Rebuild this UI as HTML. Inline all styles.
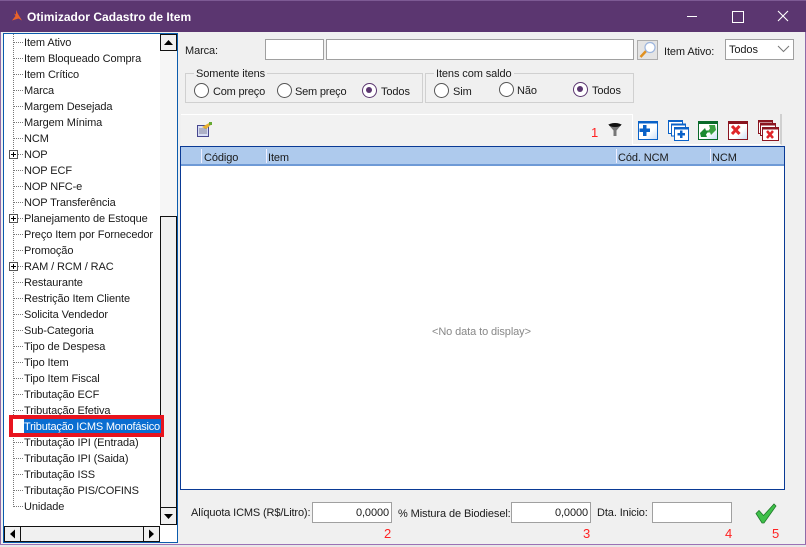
<!DOCTYPE html>
<html><head><meta charset="utf-8">
<style>
html,body{margin:0;padding:0}
body{width:806px;height:547px;position:relative;overflow:hidden;background:#f0f0f0;font:10.5px "DejaVu Sans",sans-serif;color:#1a1a1a}
.a{position:absolute}
.t{position:absolute;white-space:nowrap;line-height:14px;font-family:"Liberation Sans",sans-serif;font-size:11px;letter-spacing:-.1px;margin-top:1px}
.i{position:absolute;background:#fff;border:1px solid #a0a0a0;box-sizing:border-box;border-width:1px}
.g{position:absolute;border:1px solid #d0d0d0;box-sizing:border-box}
.r{position:absolute;width:15px;height:15px;border:1.3px solid #555;border-radius:50%;box-sizing:border-box;background:#fff}
.r.on{border-color:#5b3670}
.r.on:after{content:"";position:absolute;left:3px;top:3px;width:6.4px;height:6.4px;background:#5b3670;border-radius:50%}
.n{position:absolute;white-space:nowrap;color:#f22;font:13px "Liberation Sans",sans-serif;line-height:14px}
.sb{position:absolute;box-sizing:border-box;border:1.5px solid #111;background:#f0f0f0}
</style></head><body>
<div class="a" style="left:0;top:0;width:806px;height:32px;background:#5b3670"></div>
<div class="a" style="left:0;top:0;width:806px;height:1px;background:#7d5a94"></div>
<svg class="a" style="left:11px;top:10px" width="12" height="12" viewBox="0 0 12 12"><path d="M5 0L7 4L11 10.500L7.500 8.500L1 10.500L4.500 6L3 3.500L5 4.500Z" fill="#e8622a"/></svg>
<div class="t" style="left:27px;top:9px;color:#fff;font:bold 12px 'Liberation Sans',sans-serif;line-height:14px;letter-spacing:.03px">Otimizador Cadastro de Item</div>
<div class="a" style="left:687px;top:16px;width:10px;height:1px;background:#fff"></div>
<div class="a" style="left:732px;top:11px;width:10px;height:10px;border:1px solid #fff"></div>
<svg class="a" style="left:777px;top:10px" width="12" height="12"><path d="M1 1L11 11M11 1L1 11" stroke="#fff" stroke-width="1.100"/></svg>
<div class="a" style="left:0;top:32px;width:1px;height:512px;background:#8f6aa8"></div>
<div class="a" style="left:805px;top:32px;width:1px;height:512px;background:#8f6aa8"></div>
<div class="a" style="left:0;top:544px;width:806px;height:1px;background:#9b72b5"></div>
<div class="a" style="left:0;top:545px;width:806px;height:2px;background:#e8e8e8"></div>

<!-- tree -->
<div class="a" style="left:3px;top:33px;width:175px;height:510px;background:#fff;border:1px solid #0b5cad;box-sizing:border-box"></div>
<!-- v scroll -->
<div class="a" style="left:160px;top:34px;width:17px;height:490px;background:#f6f6f6"></div>
<div class="sb" style="left:160px;top:34px;width:17px;height:17px;background:#f0f0f0"></div>
<svg class="a" style="left:160px;top:34px" width="17" height="17"><path d="M4 11h9L8.500 6z" fill="#000"/></svg>
<div class="sb" style="left:160px;top:216px;width:17px;height:292px"></div>
<div class="sb" style="left:160px;top:507px;width:17px;height:18px"></div>
<svg class="a" style="left:160px;top:507px" width="17" height="18"><path d="M4 7h9L8.500 12z" fill="#000"/></svg>
<!-- h scroll -->
<div class="sb" style="left:4px;top:526px;width:17px;height:16px"></div>
<svg class="a" style="left:4px;top:526px" width="17" height="16"><path d="M11 3.500v9L6 8z" fill="#000"/></svg>
<div class="sb" style="left:20px;top:526px;width:124px;height:16px"></div>
<div class="sb" style="left:143px;top:526px;width:17px;height:16px"></div>
<svg class="a" style="left:143px;top:526px" width="17" height="16"><path d="M6 3.500v9L11 8z" fill="#000"/></svg>

<svg class="a" style="left:4px;top:34px" width="22" height="480">
<g stroke="#777" stroke-dasharray="1 1" fill="none">
<path d="M9.500 0V473"/>
<path d="M10 8.500H20M10 24.500H20M10 40.500H20M10 56.500H20M10 72.500H20M10 88.500H20M10 104.500H20M10 120.500H20M10 136.500H20M10 152.500H20M10 168.500H20M10 184.500H20M10 200.500H20M10 216.500H20M10 232.500H20M10 248.500H20M10 264.500H20M10 280.500H20M10 296.500H20M10 312.500H20M10 328.500H20M10 344.500H20M10 360.500H20M10 376.500H20M10 408.500H20M10 424.500H20M10 440.500H20M10 456.500H20M10 472.500H20"/>
</g>
<g fill="#fff" stroke="#555"><rect x="5.500" y="116.500" width="8" height="8"/><rect x="5.500" y="180.500" width="8" height="8"/><rect x="5.500" y="228.500" width="8" height="8"/></g>
<g stroke="#000"><path d="M7 120.500h5M9.500 118v5M7 184.500h5M9.500 182v5M7 232.500h5M9.500 230v5"/></g>
</svg>
<div class="t" style="left:24px;top:35px">Item Ativo</div>
<div class="t" style="left:24px;top:51px">Item Bloqueado Compra</div>
<div class="t" style="left:24px;top:67px">Item Crítico</div>
<div class="t" style="left:24px;top:83px">Marca</div>
<div class="t" style="left:24px;top:99px">Margem Desejada</div>
<div class="t" style="left:24px;top:115px">Margem Mínima</div>
<div class="t" style="left:24px;top:131px">NCM</div>
<div class="t" style="left:24px;top:147px">NOP</div>
<div class="t" style="left:24px;top:163px">NOP ECF</div>
<div class="t" style="left:24px;top:179px">NOP NFC-e</div>
<div class="t" style="left:24px;top:195px">NOP Transferência</div>
<div class="t" style="left:24px;top:211px">Planejamento de Estoque</div>
<div class="t" style="left:24px;top:227px">Preço Item por Fornecedor</div>
<div class="t" style="left:24px;top:243px">Promoção</div>
<div class="t" style="left:24px;top:259px">RAM / RCM / RAC</div>
<div class="t" style="left:24px;top:275px">Restaurante</div>
<div class="t" style="left:24px;top:291px">Restrição Item Cliente</div>
<div class="t" style="left:24px;top:307px">Solicita Vendedor</div>
<div class="t" style="left:24px;top:323px">Sub-Categoria</div>
<div class="t" style="left:24px;top:339px">Tipo de Despesa</div>
<div class="t" style="left:24px;top:355px">Tipo Item</div>
<div class="t" style="left:24px;top:371px">Tipo Item Fiscal</div>
<div class="t" style="left:24px;top:387px">Tributação ECF</div>
<div class="t" style="left:24px;top:403px">Tributação Efetiva</div>
<div class="a" style="left:9px;top:415px;width:155px;height:22px;background:#e8141e"></div>
<div class="a" style="left:13px;top:419px;width:11px;height:14px;background:#fff"></div>
<div class="a" style="left:24px;top:419px;width:137px;height:14px;background:#0a6ed1"></div>
<div class="t" style="left:24px;top:419px;color:#fff;letter-spacing:-.21px">Tributação ICMS Monofásico</div>
<div class="t" style="left:24px;top:435px">Tributação IPI (Entrada)</div>
<div class="t" style="left:24px;top:451px">Tributação IPI (Saida)</div>
<div class="t" style="left:24px;top:467px">Tributação ISS</div>
<div class="t" style="left:24px;top:483px">Tributação PIS/COFINS</div>
<div class="t" style="left:24px;top:499px">Unidade</div>

<!-- filter row -->
<div class="t" style="left:185px;top:43px">Marca:</div>
<div class="i" style="left:265px;top:39px;width:59px;height:21px"></div>
<div class="i" style="left:326px;top:39px;width:308px;height:21px"></div>
<div class="a" style="left:637px;top:40px;width:21px;height:20px;background:#e4e4e4;border:1px solid #adadad;box-sizing:border-box"></div>
<svg class="a" style="left:637px;top:40px" width="21" height="20"><path d="M3.500 17L10 10" stroke="#e09020" stroke-width="2.500"/><circle cx="13" cy="7.500" r="5" fill="#fff" stroke="#9db6de" stroke-width="1.200"/></svg>
<div class="t" style="left:664px;top:44px">Item Ativo:</div>
<div class="i" style="left:725px;top:39px;width:69px;height:21px"></div>
<div class="t" style="left:729px;top:42px">Todos</div>
<svg class="a" style="left:777px;top:45px" width="13" height="8"><path d="M1 1l5.500 5.500L12 1" stroke="#777" fill="none"/></svg>

<!-- groups -->
<div class="g" style="left:185px;top:73px;width:238px;height:30px"></div>
<div class="t" style="left:194px;top:66px;background:#f0f0f0;padding:0 2px">Somente itens</div>
<div class="r" style="left:194px;top:83px"></div><div class="t" style="left:213px;top:84px;letter-spacing:-.2px">Com preço</div>
<div class="r" style="left:277px;top:83px"></div><div class="t" style="left:295px;top:84px;letter-spacing:-.2px">Sem preço</div>
<div class="r on" style="left:362px;top:83px"></div><div class="t" style="left:381px;top:84px">Todos</div>
<div class="g" style="left:425px;top:73px;width:209px;height:30px"></div>
<div class="t" style="left:434px;top:66px;background:#f0f0f0;padding:0 2px">Itens com saldo</div>
<div class="r" style="left:434px;top:83px"></div><div class="t" style="left:453px;top:84px">Sim</div>
<div class="r" style="left:499px;top:82px"></div><div class="t" style="left:517px;top:83px">Não</div>
<div class="r on" style="left:573px;top:82px"></div><div class="t" style="left:592px;top:83px">Todos</div>

<!-- toolbar -->
<div class="a" style="left:181px;top:114px;width:601px;height:32px;background:#f2f2f2;border-top:1px solid #fff;box-sizing:border-box"></div>
<div class="a" style="left:632px;top:114px;width:150px;height:31px;background:#f0f0f0;border-left:1px solid #fff;border-right:2px solid #d0d0d0;border-bottom:1px solid #fff;box-sizing:border-box"></div>
<svg class="a" style="left:196px;top:121px" width="18" height="17"><rect x="1.500" y="4.500" width="11" height="11" fill="#d8def5" stroke="#47478f"/><path d="M3 8h8M3 10h8M3 12h8" stroke="#667" stroke-width=".8"/><path d="M6 6L13 2L16 3L10 8Z" fill="#e8b030"/><path d="M13 1h3v3h-3z" fill="#6a3"/></svg>
<div class="n" style="left:591px;top:126px">1</div>
<svg class="a" style="left:607px;top:122px" width="16" height="16"><path d="M1 2h14L9.500 8.500V14h-3V8.500Z" fill="#777"/><ellipse cx="8" cy="3" rx="6" ry="2" fill="#111"/></svg>
<svg width="0" height="0" class="a"><defs>
<linearGradient id="gr" x1="0" y1="0" x2="1" y2="1"><stop offset="0" stop-color="#fff"/><stop offset=".6" stop-color="#fff"/><stop offset="1" stop-color="#c8dcf5"/></linearGradient>
</defs></svg>
<svg class="a" style="left:638px;top:121px" width="20" height="19"><rect x=".5" y=".5" width="19" height="18" fill="url(#gr)" stroke="#0a62c8"/><rect x="0" y="0" width="20" height="2.500" fill="#0a62c8"/><path d="M5 4h3.500v3.500H12V11H8.500v4H5v-4H1.500V7.500H5Z" fill="#0a62c8"/></svg>
<svg class="a" style="left:668px;top:120px" width="21" height="21"><g fill="#fff" stroke="#0a62c8"><rect x=".5" y=".5" width="14" height="13"/><rect x="3.500" y="4" width="14" height="12"/><rect x="6.500" y="7.500" width="14" height="13"/></g><rect x="0" y="0" width="15" height="2" fill="#0a62c8"/><rect x="3" y="3.500" width="15" height="2" fill="#0a62c8"/><rect x="6" y="7" width="15" height="2.500" fill="#0a62c8"/><path d="M12 10.500h2.500v2.500H17v2.500h-2.500V18H12v-2.500H9.500V13H12Z" fill="#0a62c8"/></svg>
<svg class="a" style="left:698px;top:121px" width="20" height="19"><rect x=".5" y=".5" width="19" height="18" fill="url(#gr)" stroke="#0a6a2a"/><rect x="0" y="0" width="20" height="3" fill="#0a6a2a"/><path d="M2 12L7 7L8 9.500H11L8 13.500L9 16H3Z" fill="#1a8a30"/><path d="M18 9L13 14L12 11.500H9L12 7.500L11 4H17Z" fill="#3aa040"/></svg>
<svg class="a" style="left:728px;top:121px" width="20" height="19"><rect x=".5" y=".5" width="19" height="18" fill="url(#gr)" stroke="#8b1520"/><rect x="0" y="0" width="20" height="3" fill="#8b1520"/><path d="M4 5l7.500 8M11.500 5L4 13" stroke="#e0262a" stroke-width="3"/></svg>
<svg class="a" style="left:758px;top:120px" width="21" height="21"><g fill="#fff" stroke="#8b1520"><rect x=".5" y=".5" width="14" height="13"/><rect x="2.500" y="3.500" width="15" height="12"/><rect x="4.500" y="7.500" width="16" height="13"/></g><rect x="0" y="0" width="15" height="2.500" fill="#8b1520"/><rect x="2" y="3" width="16" height="2.500" fill="#8b1520"/><rect x="4" y="7" width="17" height="2.500" fill="#8b1520"/><path d="M9 11l6 7M15 11l-6 7" stroke="#e0262a" stroke-width="2.500"/></svg>

<!-- grid -->
<div class="a" style="left:180px;top:146px;width:605px;height:344px;background:#fff;border:1px solid #0a3a95;box-sizing:border-box"></div>
<div class="a" style="left:181px;top:147px;width:603px;height:19px;background:#aecaed;border-bottom:2px solid #6e9ad6;box-sizing:border-box"></div>
<div class="a" style="left:201px;top:149px;width:1px;height:14px;background:#eef"></div>
<div class="a" style="left:266px;top:149px;width:1px;height:14px;background:#eef"></div>
<div class="a" style="left:616px;top:149px;width:1px;height:14px;background:#eef"></div>
<div class="a" style="left:710px;top:149px;width:1px;height:14px;background:#eef"></div>
<div class="t" style="left:204px;top:150px">Código</div>
<div class="t" style="left:268px;top:150px">Item</div>
<div class="t" style="left:618px;top:150px">Cód. NCM</div>
<div class="t" style="left:712px;top:150px">NCM</div>
<div class="t" style="left:432px;top:324px;color:#888">&lt;No data to display&gt;</div>

<!-- bottom -->
<div class="t" style="left:191px;top:505px;letter-spacing:-.14px">Alíquota ICMS (R$/Litro):</div>
<div class="i" style="left:312px;top:502px;width:80px;height:21px"></div>
<div class="t" style="left:340px;top:505px;width:49px;text-align:right">0,0000</div>
<div class="t" style="left:398px;top:506px">% Mistura de Biodiesel:</div>
<div class="i" style="left:511px;top:502px;width:80px;height:21px"></div>
<div class="t" style="left:539px;top:505px;width:49px;text-align:right">0,0000</div>
<div class="t" style="left:597px;top:505px">Dta. Inicio:</div>
<div class="i" style="left:652px;top:502px;width:80px;height:21px"></div>
<svg class="a" style="left:755px;top:503px" width="22" height="21"><path d="M1 10.500L4 7.500L8.500 12.500L19 1L21 3L9 20H7Z" fill="#3fc04a" stroke="#1f7a2a" stroke-width=".8"/></svg>
<div class="n" style="left:384px;top:527px">2</div>
<div class="n" style="left:583px;top:527px">3</div>
<div class="n" style="left:725px;top:527px">4</div>
<div class="n" style="left:772px;top:527px">5</div>
</body></html>
